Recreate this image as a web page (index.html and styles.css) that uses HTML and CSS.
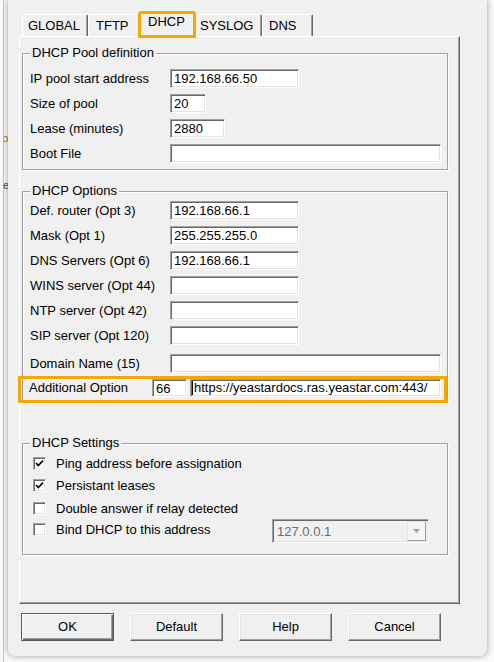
FILE: index.html
```html
<!DOCTYPE html>
<html>
<head>
<meta charset="utf-8">
<title>DHCP</title>
<link rel="stylesheet" href="styles.css">
</head>
<body>
<div class="screen">
  <div class="backdrop">
    <span class="bg-glyph g1">ɔ</span>
    <span class="bg-glyph g2">e</span>
  </div>
  <div class="dialog">
    <div class="tabs">
      <div class="tab t-global">GLOBAL</div>
      <div class="tab t-tftp">TFTP</div>
      <div class="tab t-dhcp active">DHCP</div>
      <div class="tab t-syslog">SYSLOG</div>
      <div class="tab t-dns">DNS</div>
    </div>
    <div class="panel">
      <div class="group g-pool">
        <div class="group-title">DHCP Pool definition</div>
        <div class="rows">
          <div class="row"><span class="label">IP pool start address</span><div class="field w-ip">192.168.66.50</div></div>
          <div class="row"><span class="label">Size of pool</span><div class="field w-size">20</div></div>
          <div class="row"><span class="label">Lease (minutes)</span><div class="field w-lease">2880</div></div>
          <div class="row"><span class="label">Boot File</span><div class="field w-wide"></div></div>
        </div>
      </div>
      <div class="group g-opts">
        <div class="group-title">DHCP Options</div>
        <div class="rows">
          <div class="row"><span class="label">Def. router (Opt 3)</span><div class="field w-ip">192.168.66.1</div></div>
          <div class="row"><span class="label">Mask (Opt 1)</span><div class="field w-ip">255.255.255.0</div></div>
          <div class="row"><span class="label">DNS Servers (Opt 6)</span><div class="field w-ip">192.168.66.1</div></div>
          <div class="row"><span class="label">WINS server (Opt 44)</span><div class="field w-ip"></div></div>
          <div class="row"><span class="label">NTP server (Opt 42)</span><div class="field w-ip"></div></div>
          <div class="row"><span class="label">SIP server (Opt 120)</span><div class="field w-ip"></div></div>
          <div class="row row-domain"><span class="label">Domain Name (15)</span><div class="field w-wide"></div></div>
          <div class="row-extra">
            <span class="label-extra">Additional Option</span>
            <div class="field f-code">66</div>
            <div class="field f-url"><span class="caret"></span>https://yeastardocs.ras.yeastar.com:443/</div>
          </div>
        </div>
      </div>
      <div class="group g-set">
        <div class="group-title">DHCP Settings</div>
        <div class="cb-row">
          <span class="checkbox"><svg viewBox="0 0 9 9" width="9" height="9"><polyline points="1,4 3.3,6.5 8,1.6" fill="none" stroke="#000" stroke-width="1.7"/></svg></span>
          <span class="cb-text">Ping address before assignation</span>
        </div>
        <div class="cb-row">
          <span class="checkbox"><svg viewBox="0 0 9 9" width="9" height="9"><polyline points="1,4 3.3,6.5 8,1.6" fill="none" stroke="#000" stroke-width="1.7"/></svg></span>
          <span class="cb-text">Persistant leases</span>
        </div>
        <div class="cb-row cb-gap">
          <span class="checkbox"></span>
          <span class="cb-text">Double answer if relay detected</span>
        </div>
        <div class="bind-row">
          <div class="cb-row cb-bind">
            <span class="checkbox"></span>
            <span class="cb-text">Bind DHCP to this address</span>
          </div>
          <div class="combo">
            <span class="combo-text">127.0.0.1</span>
            <span class="combo-btn"><svg viewBox="0 0 7 4" width="7" height="4"><polygon points="0,0 7,0 3.5,4" fill="#a0a0a0"/></svg></span>
          </div>
        </div>
      </div>
    </div>
    <div class="buttons">
      <div class="btn btn-default">OK</div>
      <div class="btn">Default</div>
      <div class="btn">Help</div>
      <div class="btn">Cancel</div>
    </div>
  </div>
</div>
</body>
</html>
```

FILE: styles.css
```css
* { box-sizing: border-box; }
html, body {
  margin: 0;
  padding: 0;
  background: #fafafa;
}
body {
  font-family: "Liberation Sans", Arial, sans-serif;
  font-size: 13px;
  color: #000;
}
.screen {
  width: 494px;
  height: 662px;
  display: flex;
  overflow: hidden;
  background: #fafafa;
}
.backdrop {
  flex: 0 0 8px;
  height: 662px;
  padding-top: 131px;
  overflow: hidden;
  background: linear-gradient(to right, #f8f8f8 0 3px, #c6c6c6 3px 4px, #f8f8f8 4px);
}
.bg-glyph {
  display: block;
  height: 14px;
  line-height: 14px;
  font-size: 11px;
  margin-left: 3px;
  color: #c46a12;
}
.g2 {
  margin-top: 33px;
  color: #3a4a60;
}
.dialog {
  flex: 0 0 479px;
  height: 656px;
  background: #f0f0f0;
  border-radius: 0 0 7px 7px;
  box-shadow: 0 0 6px rgba(0, 0, 0, 0.38);
  padding: 12px 0 0 11px;
  position: relative;
  z-index: 1;
}

/* tabs */
.tabs {
  display: flex;
  align-items: flex-end;
  height: 24px;
  margin-left: 3px;
}
.tab {
  height: 22px;
  border: 1px solid;
  border-color: #fff #696969 transparent #fff;
  border-bottom: none;
  border-radius: 2px 2px 0 0;
  box-shadow: inset -1px 0 0 #a0a0a0;
  line-height: 21px;
  white-space: nowrap;
  background: #f0f0f0;
}
.t-global { width: 66px; padding-left: 5px; }
.t-tftp { width: 53px; padding-left: 7px; }
.t-dhcp { width: 56px; padding-left: 8px; }
.t-syslog { width: 69px; padding-left: 6px; }
.t-dns { width: 51px; padding-left: 6px; }
.tab.active {
  height: 25px;
  margin: 0 -2px -1px -2px;
  line-height: 18px;
  position: relative;
  z-index: 2;
  outline: 3px solid #f4a800;
  outline-offset: -2px;
}

/* panel */
.panel {
  width: 441px;
  height: 568px;
  border: 1px solid;
  border-color: #fff #696969 #696969 #fff;
  box-shadow: inset -1px -1px 0 #a0a0a0;
  padding: 16px 0 0 2px;
  position: relative;
  z-index: 1;
}

/* group boxes */
.group {
  width: 426px;
  border: 1px solid #a0a0a0;
  box-shadow: 1px 1px 0 #fff, inset 1px 1px 0 #fff;
  padding-left: 7px;
}
.group-title {
  display: table;
  margin: -9px 0 0 0;
  padding: 0 2px;
  background: #f0f0f0;
  line-height: 16px;
  white-space: nowrap;
}
.g-pool { padding-bottom: 6px; }
.g-pool .group-title { margin-bottom: 8px; }
.g-pool .rows { display: flex; flex-direction: column; gap: 6px; }
.g-opts { margin-top: 21px; padding-bottom: 2px; }
.g-opts .group-title { margin-bottom: 2px; }
.g-opts .rows { display: flex; flex-direction: column; gap: 6px; }
.g-set { margin-top: 40px; padding-left: 10px; padding-bottom: 11px; }
.g-set .group-title { margin-left: -3px; margin-bottom: 1px; }

.row {
  display: flex;
  align-items: center;
  height: 19px;
}
.row-domain { margin-top: 3px; }
.label {
  flex: 0 0 140px;
  white-space: nowrap;
}

.field {
  height: 19px;
  background: #fff;
  border: 1px solid;
  border-color: #a0a0a0 #fff #fff #a0a0a0;
  box-shadow: inset 1px 1px 0 #696969, inset -1px -1px 0 #e3e3e3;
  padding-left: 3px;
  line-height: 17px;
  white-space: nowrap;
  overflow: hidden;
}
.w-ip { width: 129px; }
.w-size { width: 36px; }
.w-lease { width: 55px; }
.w-wide { width: 271px; }

.row-extra {
  display: flex;
  align-items: flex-start;
  height: 21px;
  width: 423px;
  margin-left: -9px;
  padding-left: 8px;
  outline: 3px solid #f4a800;
}
.label-extra {
  flex: 0 0 123px;
  line-height: 17px;
  white-space: nowrap;
}
.field.f-code { width: 35px; height: 18px; }
.field.f-url {
  width: 251px;
  height: 18px;
  margin-left: 3px;
  padding-left: 1px;
  line-height: 16px;
}
.caret {
  display: inline-block;
  width: 1px;
  height: 14px;
  background: #000;
  vertical-align: -3px;
  margin-right: 1px;
}

/* checkboxes */
.cb-row {
  display: flex;
  align-items: center;
  height: 22px;
}
.cb-gap { margin-top: 1px; }
.checkbox {
  flex: 0 0 13px;
  width: 13px;
  height: 13px;
  background: #fff;
  border: 1px solid;
  border-color: #a0a0a0 #fff #fff #a0a0a0;
  box-shadow: inset 1px 1px 0 #696969, inset -1px -1px 0 #e3e3e3;
  display: flex;
  align-items: center;
  justify-content: center;
}
.checkbox svg { display: block; }
.cb-text {
  margin-left: 10px;
  white-space: nowrap;
}
.bind-row {
  display: flex;
  align-items: flex-start;
}
.cb-bind {
  flex: 0 0 239px;
  height: 20px;
}
.combo {
  width: 157px;
  height: 24px;
  border: 1px solid;
  border-color: #a0a0a0 #fff #fff #a0a0a0;
  box-shadow: inset 1px 1px 0 #696969, inset -1px -1px 0 #e3e3e3;
  background: #f0f0f0;
  display: flex;
  align-items: center;
  padding: 2px;
}
.combo-text {
  flex: 1;
  padding-left: 2px;
  color: #6d6d6d;
}
.combo-btn {
  width: 19px;
  height: 20px;
  border: 1px solid;
  border-color: #e3e3e3 #a0a0a0 #a0a0a0 #e3e3e3;
  background: #f4f4f4;
  display: flex;
  align-items: center;
  justify-content: center;
}
.combo-btn svg { display: block; }

/* buttons */
.buttons {
  display: flex;
  gap: 16px;
  margin-top: 9px;
  padding-left: 2px;
}
.btn {
  width: 93px;
  height: 28px;
  border: 1px solid;
  border-color: #fff #696969 #696969 #fff;
  box-shadow: inset -1px -1px 0 #a0a0a0, inset 1px 1px 0 #e3e3e3;
  background: #f0f0f0;
  text-align: center;
  line-height: 26px;
}
.btn-default {
  border-color: #5a5a5a;
  box-shadow: inset 1px 1px 0 #fff, inset -1px -1px 0 #696969, inset -2px -2px 0 #a0a0a0;
}
```
